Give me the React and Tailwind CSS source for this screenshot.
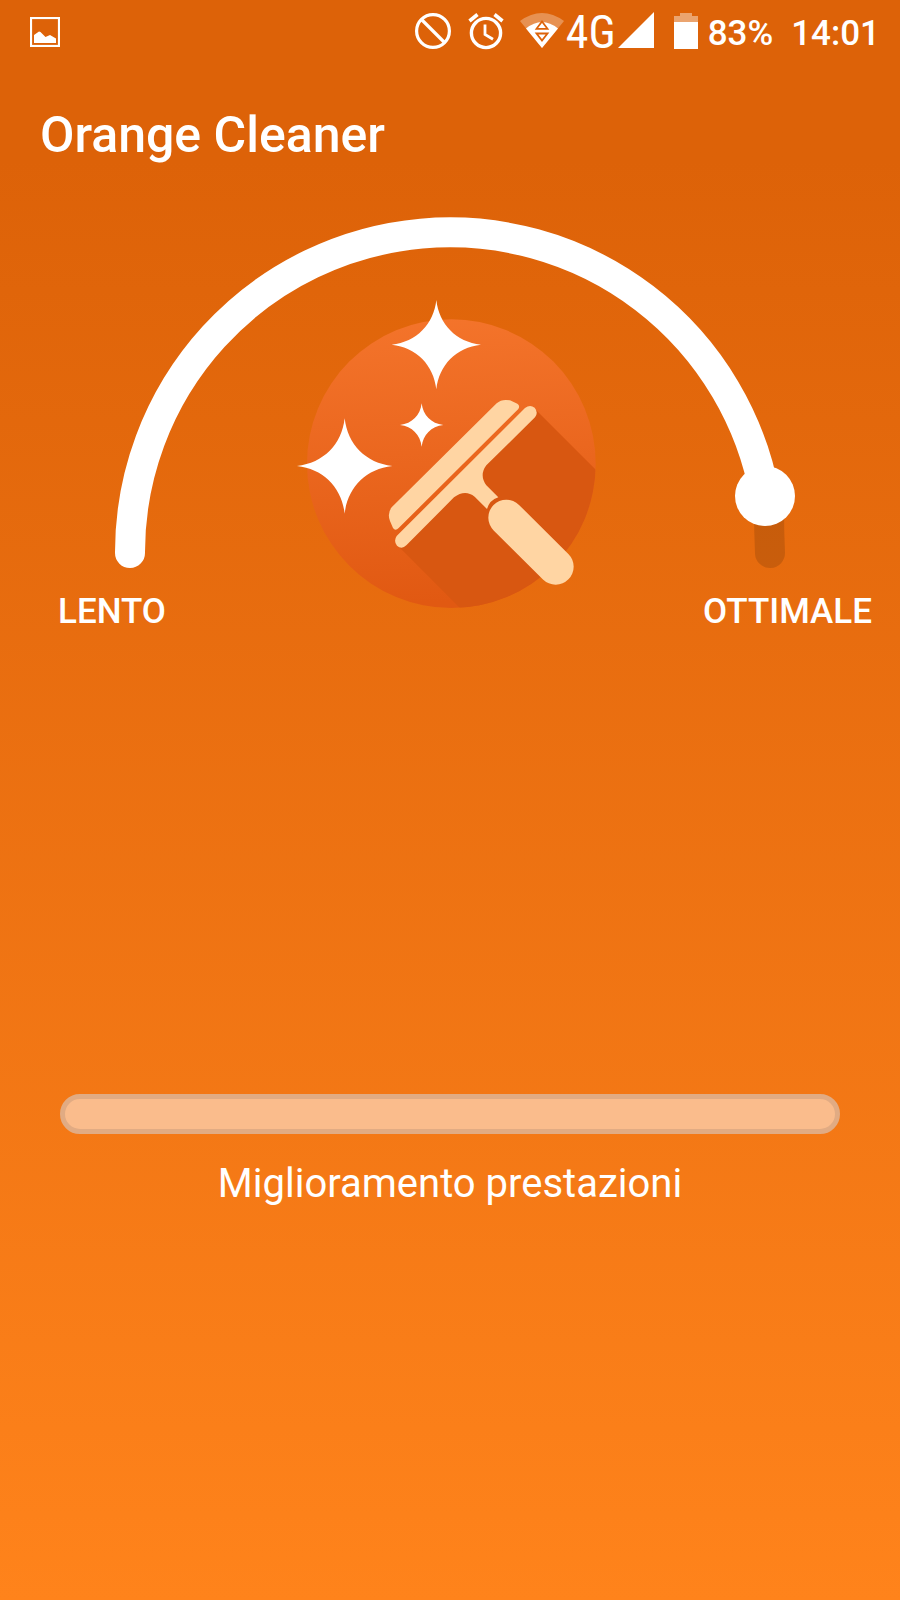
function Star({ x, y, s }) {
  return (
    <path
      transform={`translate(${x} ${y}) scale(${s})`}
      d="M0-100C6-46 44-6 100 0C44 6 6 46 0 100C-6 46-44 6-100 0C-44-6-6-46 0-100Z"
      fill="#fff"
    />
  );
}

function StatusBar() {
  return (
    <header className="flex h-16 items-center pr-5 pl-[30px]">
      <svg className="size-[30px]" viewBox="0 0 30 30" role="img" aria-label="Immagine">
        <rect x="1" y="1" width="28" height="28" fill="none" stroke="#fff" strokeWidth="2.2" />
        <path d="M4 26V18L9 14.5L10.5 15L15.5 20L20 18L26 21.5V26Z" fill="#fff" />
      </svg>
      <svg className="ml-auto h-[38px] w-[38px]" viewBox="0 0 38 38" fill="none" stroke="#fff" strokeWidth="3.2">
        <circle cx="19" cy="18" r="16.4" />
        <path d="M7.5 6.5L30.5 29.5" />
      </svg>
      <svg className="ml-4 h-[38px] w-9" viewBox="0 0 36 38" fill="none" stroke="#fff">
        <circle cx="18" cy="20" r="14.6" strokeWidth="3.4" />
        <path d="M17 11.5V21.5L25 26.3" strokeWidth="2.8" />
        <path d="M1.5 8L9.5 1.5M34.5 8L26.5 1.5" strokeWidth="3.6" />
      </svg>
      <svg className="ml-4 h-[38px] w-11" viewBox="0 0 44 38">
        <path d="M0 8Q22-8 44 8L22 35Z" fill="#fff" fillOpacity=".3" />
        <path d="M6 15.5Q22 2.5 38 15.5L22 35Z" fill="#fff" />
        <path d="M22 8.5L27.5 15.8H16.5ZM16.5 20.5H27.5L22 27.5Z" fill="#fff" stroke="#dd6208" strokeWidth="1.8" />
      </svg>
      <span className="ml-0.5 font-['Liberation_Sans_Narrow','Roboto_Condensed','Roboto',sans-serif] text-[46px] leading-none">
        4G
      </span>
      <svg className="mb-1 ml-0.5 size-9" viewBox="0 0 36 36">
        <path d="M0 36L36 0V36Z" fill="#fff" />
      </svg>
      <svg className="ml-5 h-[38px] w-6" viewBox="0 0 24 38">
        <path d="M0 9V3H6V0H18V3H24V9Z" fill="#fff" fillOpacity=".42" />
        <path d="M0 9H24V36H0Z" fill="#fff" />
      </svg>
      <div className="flex gap-[18px] pt-0.5 pl-2.5 text-[35px] leading-none font-medium">
        <span>83%</span>
        <time>14:01</time>
      </div>
    </header>
  );
}

function Gauge() {
  return (
    <svg
      className="mx-auto block w-full max-w-[700px] overflow-visible"
      viewBox="100 204 700 382"
      role="img"
      aria-label="Prestazioni del telefono"
    >
      <defs>
        <linearGradient id="disc" x1="0" y1="0" x2="0.05" y2="1">
          <stop offset="0" stopColor="#f4742b" />
          <stop offset="1" stopColor="#e15912" />
        </linearGradient>
        <clipPath id="disc-clip">
          <circle cx="514" cy="551" r="433" />
        </clipPath>
      </defs>
      <g fill="none" strokeWidth="30" strokeLinecap="round">
        <path d="M769 510Q769 530 770 553" stroke="#000" strokeOpacity=".13" />
        <path d="M130 553A320 320 0 0 1 765 496" stroke="#fff" />
      </g>
      <circle cx="765" cy="496" r="30" fill="#fff" />
      <g transform="translate(280 280) scale(.33333)">
        <circle cx="514" cy="551" r="433" fill="url(#disc)" />
        <path
          d="M768 390L1000 622V1100H656L358 802Z"
          fill="#d85711"
          clipPath="url(#disc-clip)"
        />
        <g fill="#ffd5a3">
          <path d="M650 370Q665 356 690 361L712 371Q721 377 715 387L356 744Q346 754 339 744L330 723Q321 700 335 682Z" />
          <path d="M735 384Q750 372 764 383Q776 398 765 412L619 556Q597 585 619 616L655 652Q629 660 621 687L584 650Q555 627 522 652L379 796Q365 810 351 797Q340 783 350 768Z" />
        </g>
        <path d="M679 713L827 860" stroke="#ffd5a3" strokeWidth="108" strokeLinecap="round" />
        <Star x="469" y="194" s="1.34" />
        <Star x="425" y="435" s=".65" />
        <Star x="194" y="558" s="1.43" />
      </g>
    </svg>
  );
}

export default function App() {
  return (
    <div className="flex min-h-screen flex-col bg-linear-to-b from-[#dd6208] from-10% to-[#ff831b] font-['Roboto',sans-serif] text-white">
      <StatusBar />
      <h1 className="flex h-[140px] items-center px-10 pt-0.5 text-[50px] leading-none font-medium">
        Orange Cleaner
      </h1>
      <main>
        <Gauge />
        <div className="relative flex justify-between pt-0.5 pr-7 pl-[58px] text-[35px] leading-[48px] font-medium">
          <span>LENTO</span>
          <span>OTTIMALE</span>
        </div>
        <section className="mt-[458px] px-[60px] pb-10 text-center">
          <div
            role="progressbar"
            aria-labelledby="progress-label"
            aria-valuenow={100}
            className="h-10 rounded-full border-5 border-[#e1ab83] bg-[#fabc8c]"
          />
          <p id="progress-label" className="mt-[26px] text-[40px] leading-[48px]">
            Miglioramento prestazioni
          </p>
        </section>
      </main>
    </div>
  );
}
